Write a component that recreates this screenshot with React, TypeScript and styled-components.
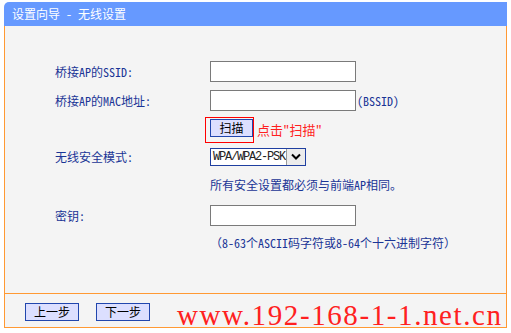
import * as React from 'react'
import styled, { createGlobalStyle } from 'styled-components'

const GlobalStyle = createGlobalStyle`
  html, body {
    margin: 0;
    padding: 0;
    background: #fff;
  }
  body {
    font-family: "Noto Sans Mono CJK SC", "Noto Sans CJK SC", sans-serif;
    font-size: 12px;
  }
`

const Frame = styled.div`
  width: 503px;
  margin: 2px 0 0 4px;
`

const Header = styled.div`
  height: 24px;
  line-height: 24px;
  padding-left: 8px;
  background: #6699ff;
  border-top-left-radius: 5px;
  color: #fff;
  font-size: 12px;
`

const Body = styled.div`
  background: #f4f4f4;
  border: 1px solid #ff9933;
  border-top: none;
`

const Form = styled.div`
  box-sizing: border-box;
  height: 267px;
  padding: 30px 0 0 50px;
`

const Row = styled.div<{ $h: number }>`
  display: grid;
  grid-template-columns: 155px auto;
  align-items: center;
  height: ${p => p.$h}px;
`

const Label = styled.div`
  color: #1a3596;
`

const Field = styled.div`
  display: flex;
  align-items: center;
`

const TextInput = styled.input`
  box-sizing: border-box;
  width: 146px;
  height: 21px;
  margin: 0;
  padding: 0 2px;
  border: 1px solid #7a7a7a;
  background: #fff;
`

const Note = styled.span<{ $red?: boolean }>`
  color: ${p => (p.$red ? '#ff1f1f' : '#1a3596')};
  margin-left: ${p => (p.$red ? 3 : 1)}px;
  font-size: ${p => (p.$red ? 13 : 12)}px;
`

const Hint = styled.span`
  color: #1a3596;
`

const ScanMark = styled.span`
  display: inline-flex;
  margin-left: -5px;
  padding: 1px 0 5px 4px;
  border: 1px solid #ff0000;
`

const Btn = styled.button<{ $w: number }>`
  box-sizing: border-box;
  width: ${p => p.$w}px;
  height: 18px;
  margin: 0;
  padding: 0;
  border: 1px solid #2146ad;
  background: #dcdfff;
  color: #000;
  font-family: "Noto Sans CJK SC", sans-serif;
  font-size: 12px;
  line-height: 16px;
`

const Select = styled.div`
  box-sizing: border-box;
  display: flex;
  width: 96px;
  height: 18px;
  border: 1px solid #1f3fa0;
  background: #fff;
`

const SelectText = styled.span`
  flex: 1;
  padding-left: 2px;
  font-family: "Liberation Mono", monospace;
  font-size: 12px;
  letter-spacing: -1.2px;
  line-height: 16px;
  color: #222;
`

const SelectArrow = styled.span`
  display: flex;
  align-items: center;
  justify-content: center;
  width: 18px;
  background: #ececec;
  border-left: 1px solid #9a9a9a;
`

const Footer = styled.div`
  position: relative;
  display: flex;
  gap: 17px;
  height: 34px;
  box-sizing: border-box;
  padding: 9px 0 0 20px;
  border-top: 1px solid #ff9933;
`

const Watermark = styled.div`
  position: absolute;
  left: 172px;
  top: 7px;
  font-family: "Liberation Serif", serif;
  font-size: 29px;
  line-height: 29px;
  letter-spacing: 1.6px;
  color: #ff2020;
  white-space: nowrap;
  pointer-events: none;
`

const Chevron = () => (
  <svg width="10" height="7" viewBox="0 0 10 7">
    <path d="M1 1.5 L5 5.5 L9 1.5" fill="none" stroke="#000" strokeWidth="2" />
  </svg>
)

const App: React.FC = () => (
  <Frame>
    <GlobalStyle />
    <Header>设置向导 - 无线设置</Header>
    <Body>
      <Form>
        <Row $h={30}>
          <Label>桥接AP的SSID:</Label>
          <Field><TextInput /></Field>
        </Row>
        <Row $h={29}>
          <Label>桥接AP的MAC地址:</Label>
          <Field><TextInput /><Note>(BSSID)</Note></Field>
        </Row>
        <Row $h={29}>
          <span />
          <Field>
            <ScanMark><Btn $w={43}>扫描</Btn></ScanMark>
            <Note $red>点击"扫描"</Note>
          </Field>
        </Row>
        <Row $h={25}>
          <Label>无线安全模式:</Label>
          <Field>
            <Select>
              <SelectText>WPA/WPA2-PSK</SelectText>
              <SelectArrow><Chevron /></SelectArrow>
            </Select>
          </Field>
        </Row>
        <Row $h={31}>
          <span />
          <Hint>所有安全设置都必须与前端AP相同。</Hint>
        </Row>
        <Row $h={30}>
          <Label>密钥:</Label>
          <Field><TextInput type="password" /></Field>
        </Row>
        <Row $h={24}>
          <span />
          <Hint>（8-63个ASCII码字符或8-64个十六进制字符）</Hint>
        </Row>
      </Form>
      <Footer>
        <Btn $w={54}>上一步</Btn>
        <Btn $w={54}>下一步</Btn>
        <Watermark>www.192-168-1-1.net.cn</Watermark>
      </Footer>
    </Body>
  </Frame>
)

export default App
